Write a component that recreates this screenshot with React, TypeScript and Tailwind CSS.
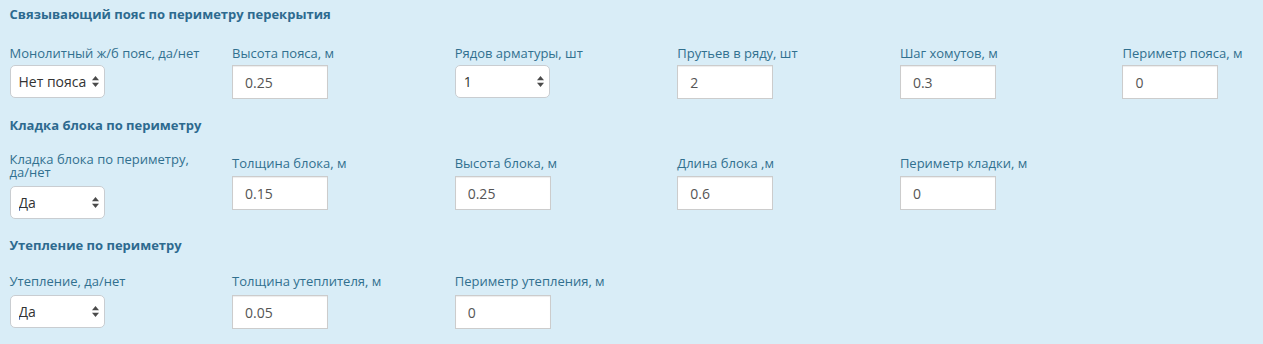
import React from "react";

type FieldProps = {
  label: string;
  value: string;
  select?: boolean;
  options?: string[];
  offset?: string;
  gap?: string;
};

const Field: React.FC<FieldProps> = ({ label, value, select, options, offset = "", gap = "mb-[6px]" }) => {
  return (
    <div className={`w-[222.6px] shrink-0 last:w-auto ${offset}`}>
      <div className={`text-[13px] leading-[13px] text-[#31708f] max-w-[195px] ${gap}`}>{label}</div>
      {select ? (
        <div className="relative w-[95px] h-[33px]">
          <select
            defaultValue={value}
            className="appearance-none w-full h-full rounded-[5px] border border-[#c9cdd1] bg-white pl-[8px] pr-[2px] text-[14px] text-[#333] outline-none"
          >
            {(options ?? [value]).map((o) => (
              <option key={o}>{o}</option>
            ))}
          </select>
          <svg
            className="pointer-events-none absolute right-[6px] top-[11px]"
            width="7"
            height="11"
            viewBox="0 0 7 11"
          >
            <path d="M3.5 0 L7 4.2 L0 4.2 Z" fill="#4a4a4a" />
            <path d="M3.5 11 L7 6.8 L0 6.8 Z" fill="#4a4a4a" />
          </svg>
        </div>
      ) : (
        <input
          type="text"
          defaultValue={value}
          className="block w-[96px] h-[34px] border border-[#ccc] bg-white px-[12px] text-[14px] text-[#555] shadow-[inset_0_1px_1px_rgba(0,0,0,0.075)] outline-none"
        />
      )}
    </div>
  );
};

const Heading: React.FC<{ text: string; className?: string }> = ({ text, className = "" }) => (
  <h4 className={`text-[13px] leading-[13px] font-bold text-[#2d6a8f] ${className}`}>{text}</h4>
);

export default function App() {
  return (
    <div className="w-full min-h-[344px] overflow-hidden bg-[#d9edf7] pl-[9.5px] pt-[8px] pb-[14px] font-['Open_Sans',sans-serif]">
      <Heading text="Связывающий пояс по периметру перекрытия" />
      <div className="mt-[26px] flex items-start">
        <Field label="Монолитный ж/б пояс, да/нет" value="Нет пояса" select options={["Нет пояса", "Да"]} gap="mb-[5px]" />
        <Field label="Высота пояса, м" value="0.25" gap="mb-[5px]" />
        <Field label="Рядов арматуры, шт" value="1" select options={["1", "2", "3"]} gap="mb-[5px]" />
        <Field label="Прутьев в ряду, шт" value="2" gap="mb-[5px]" />
        <Field label="Шаг хомутов, м" value="0.3" gap="mb-[5px]" />
        <Field label="Периметр пояса, м" value="0" gap="mb-[5px]" />
      </div>

      <Heading text="Кладка блока по периметру" className="mt-[20px]" />
      <div className="mt-[21px] flex items-start">
        <Field label="Кладка блока по периметру, да/нет" value="Да" select options={["Да", "Нет"]} gap="mb-[7px]" />
        <Field label="Толщина блока, м" value="0.15" offset="mt-[4px]" />
        <Field label="Высота блока, м" value="0.25" offset="mt-[4px]" />
        <Field label="Длина блока ,м" value="0.6" offset="mt-[4px]" />
        <Field label="Периметр кладки, м" value="0" offset="mt-[4px]" />
      </div>

      <Heading text="Утепление по периметру" className="mt-[20px]" />
      <div className="mt-[23px] flex items-start">
        <Field label="Утепление, да/нет" value="Да" select options={["Да", "Нет"]} gap="mb-[7px]" />
        <Field label="Толщина утеплителя, м" value="0.05" gap="mb-[7px]" />
        <Field label="Периметр утепления, м" value="0" gap="mb-[7px]" />
      </div>
    </div>
  );
}
